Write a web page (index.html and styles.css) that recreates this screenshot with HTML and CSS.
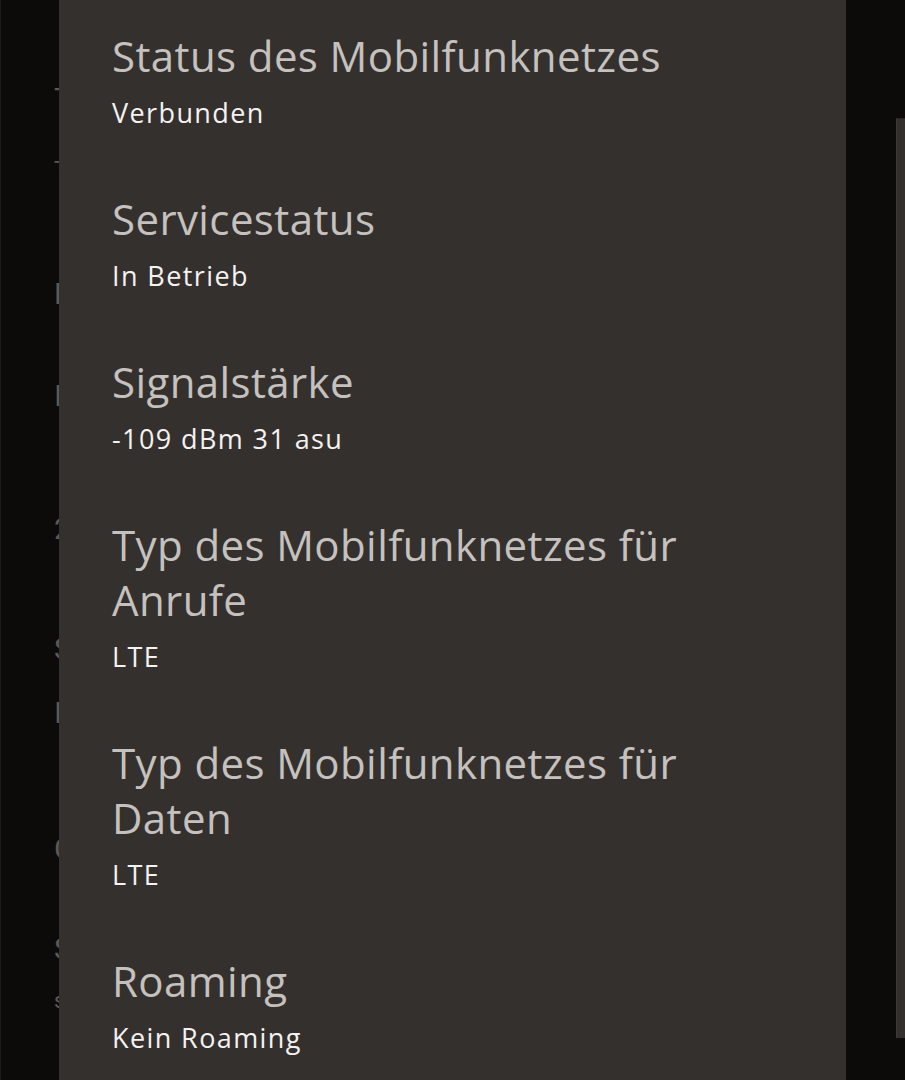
FILE: index.html
```html
<!DOCTYPE html>
<html lang="de">
<head>
<meta charset="utf-8">
<title>SIM-Status</title>
<link rel="stylesheet" href="styles.css">
</head>
<body>
<div class="page">
  <div class="bg-line big t1">Telefonnummer</div>
  <div class="bg-line small t2">Tippen</div>
  <div class="bg-line big t3">Daten</div>
  <div class="bg-line big t4">IMEI</div>
  <div class="bg-line big t5">2</div>
  <div class="bg-line big t6">SIM</div>
  <div class="bg-line big t7">IP</div>
  <div class="bg-line big t8">Cell</div>
  <div class="bg-line big t9">Seriennummer</div>
  <div class="bg-line small t10">s</div>
</div>
<div class="side-sheet"></div>
<div class="dialog">
  <div class="item">
    <div class="title">Status des Mobilfunknetzes</div>
    <div class="value">Verbunden</div>
  </div>
  <div class="item">
    <div class="title">Servicestatus</div>
    <div class="value">In Betrieb</div>
  </div>
  <div class="item">
    <div class="title">Signalstärke</div>
    <div class="value">-109 dBm 31 asu</div>
  </div>
  <div class="item">
    <div class="title">Typ des Mobilfunknetzes für Anrufe</div>
    <div class="value">LTE</div>
  </div>
  <div class="item">
    <div class="title">Typ des Mobilfunknetzes für Daten</div>
    <div class="value">LTE</div>
  </div>
  <div class="item">
    <div class="title">Roaming</div>
    <div class="value">Kein Roaming</div>
  </div>
</div>
</body>
</html>
```
FILE: styles.css
```css
html, body {
  margin: 0;
  padding: 0;
  height: 100%;
  overflow: hidden;
}
body {
  background: #0d0b0a;
  font-family: "Open Sans", Roboto, "Liberation Sans", sans-serif;
  border-left: 1px solid #1e1b1a;
  box-sizing: border-box;
}
.page {
  padding-left: 53px;
  color: #5f5855;
  white-space: nowrap;
  font-family: Roboto, "Liberation Sans", sans-serif;
}
.bg-line.big {
  font-size: 30px;
  line-height: 36px;
}
.bg-line.small {
  font-size: 22px;
  line-height: 28px;
}
.t1 { margin-top: 81px; }
.t2 { margin-top: 39px; }
.t3 { margin-top: 92px; }
.t4 { margin-top: 66px; }
.t5 { margin-top: 97px; }
.t6 { margin-top: 84px; }
.t7 { margin-top: 28px; }
.t8 { margin-top: 100px; }
.t9 { margin-top: 64px; }
.t10 { margin-top: 20px; }

.side-sheet {
  position: absolute;
  left: 896px;
  top: 118px;
  width: 12px;
  height: 920px;
  background: #34302d;
  border-left: 1px solid #3e3936;
  border-top: 1px solid #2a2624;
  box-sizing: border-box;
}
.dialog {
  position: absolute;
  left: 59px;
  top: 0;
  width: 787px;
  height: 1080px;
  background: #34302e;
  padding: 28px 56px 0 53px;
  box-sizing: border-box;
  display: flex;
  flex-direction: column;
  gap: 61px;
}
.title {
  font-size: 42px;
  line-height: 55px;
  letter-spacing: 0.4px;
  color: #c5c1be;
}
.value {
  margin-top: 13px;
  font-size: 27px;
  line-height: 34px;
  letter-spacing: 1.4px;
  color: #f4f2f1;
}
```
